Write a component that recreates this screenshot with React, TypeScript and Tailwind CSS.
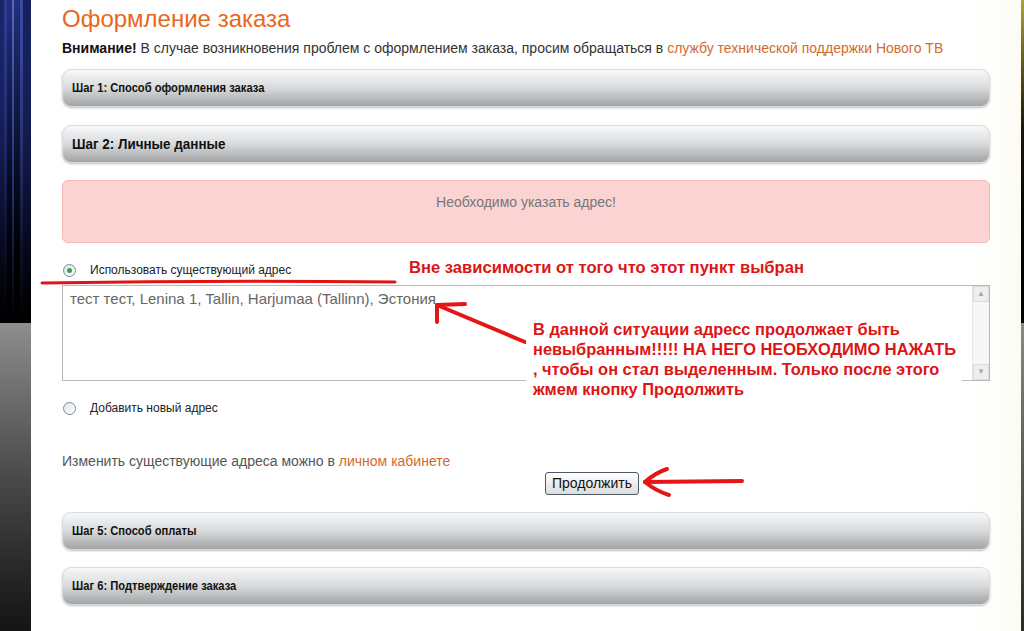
import React from "react";

const font = "font-['Liberation_Sans',Arial,sans-serif]";

function StepBar({ label, big = false }: { label: string; big?: boolean }) {
  return (
    <div className="h-[38px] rounded-[9px] border border-[#d6dde2] bg-linear-to-b from-[#f7f8f9] via-[#d9dadb] to-[#a3a4a6] shadow-[0_1px_2px_rgba(0,0,0,0.25)] flex items-center pl-[9px]">
      <span
        className={
          big
            ? "text-[14px] font-bold text-[#111] origin-left scale-x-[0.96] whitespace-nowrap"
            : "text-[12px] font-bold text-[#111] origin-left scale-x-[0.93] whitespace-nowrap"
        }
      >
        {label}
      </span>
    </div>
  );
}

function Radio({ checked }: { checked?: boolean }) {
  return (
    <span className="w-[13px] h-[13px] rounded-full border border-[#7a8a99] bg-linear-to-br from-[#dfe6ec] to-white flex items-center justify-center">
      {checked && <span className="w-[5px] h-[5px] rounded-full bg-[#3aa34a]" />}
    </span>
  );
}

export default function App() {
  return (
    <div className={`relative w-[1024px] h-[631px] overflow-hidden flex bg-white ${font}`}>
      {/* left frame */}
      <div className="w-[31px] flex flex-col">
        <div className="h-[323px] flex bg-linear-to-b from-[#223080] via-[#05081a] via-60% to-black">
          <div className="w-[4px] bg-linear-to-b from-[#1a2466] to-transparent" />
          <div className="w-[3px] bg-linear-to-b from-[#2c3c90] to-transparent" />
          <div className="w-[5px]" />
          <div className="w-[2px] bg-linear-to-b from-[#5a6ab8] via-[#2a3680] to-transparent" />
          <div className="w-[6px]" />
          <div className="w-[3px] bg-linear-to-b from-[#3a4aa0] to-transparent" />
          <div className="w-[8px] bg-linear-to-b from-[#16205c] to-transparent" />
        </div>
        <div className="flex-1 bg-linear-to-b from-[#8e8e8e] via-[#4a4a4a] to-[#141414]" />
      </div>

      {/* content */}
      <div className="flex-1 px-[31px] bg-linear-to-r from-white via-white via-95% to-[#fcfbf3]">
        <h1 className="mt-[5px] text-[24px] leading-[28px] text-[#e8671c]">Оформление заказа</h1>
        <p className="mt-[6px] text-[14px] leading-[18px] text-[#333]">
          <b className="text-[#111]">Внимание!</b> В случае возникновения проблем с оформлением заказа, просим обращаться в{" "}
          <span className="text-[#d5692a]">службу технической поддержки Нового ТВ</span>
        </p>

        <div className="mt-[12px]">
          <StepBar label="Шаг 1: Способ оформления заказа" />
        </div>
        <div className="mt-[18px]">
          <StepBar label="Шаг 2: Личные данные" big />
        </div>

        <div className="mt-[17px] h-[63px] rounded-[6px] border border-[#f3b8b8] bg-[#fcd3d3] flex justify-center pt-[12px]">
          <span className="text-[14px] leading-[18px] text-[#777]">Необходимо указать адрес!</span>
        </div>

        <div className="mt-[20px] flex items-center h-[14px] pl-[1px]">
          <Radio checked />
          <span className="ml-[14px] text-[12px] text-[#222] whitespace-nowrap">Использовать существующий адрес</span>
        </div>

        <div className="mt-[8px] h-[96px] border border-[#b9b9b9] flex">
          <div className="flex-1 px-[7px] pt-[4px] text-[15px] leading-[18px] text-[#666]">
            тест тест, Lenina 1, Tallin, Harjumaa (Tallinn), Эстония
          </div>
          <div className="w-[17px] flex flex-col justify-between bg-[#f7f7f7] border-l border-[#e6e6e6]">
            <div className="h-[16px] bg-[#eeeeee] border border-[#dcdcdc] flex items-center justify-center text-[8px] text-[#aaa]">
              ▲
            </div>
            <div className="h-[16px] bg-[#eeeeee] border border-[#dcdcdc] flex items-center justify-center text-[8px] text-[#aaa]">
              ▼
            </div>
          </div>
        </div>

        <div className="mt-[20px] flex items-center h-[14px] pl-[1px]">
          <Radio />
          <span className="ml-[14px] text-[12px] text-[#222] whitespace-nowrap">Добавить новый адрес</span>
        </div>

        <p className="mt-[37px] text-[14px] leading-[18px] text-[#555]">
          Изменить существующие адреса можно в <span className="text-[#d5692a]">личном кабинете</span>
        </p>

        <div className="mt-[2px] flex justify-center pl-[132px]">
          <button className="h-[23px] px-[6px] rounded-[3px] border border-[#4d5a66] bg-linear-to-b from-white to-[#dcdcdc] text-[14px] text-[#111]">
            Продолжить
          </button>
        </div>

        <div className="mt-[17px]">
          <StepBar label="Шаг 5: Способ оплаты" />
        </div>
        <div className="mt-[17px]">
          <StepBar label="Шаг 6: Подтверждение заказа" />
        </div>
      </div>

      {/* right frame */}
      <div className="w-[3px] flex flex-col">
        <div className="h-[323px] bg-linear-to-b from-[#b3a23a] via-[#1a1708] via-40% to-black" />
        <div className="flex-1 bg-linear-to-b from-[#8a8a8a] to-[#2a2a2a]" />
      </div>

      {/* red annotations */}
      <svg className="absolute inset-0 pointer-events-none" width="1024" height="631" viewBox="0 0 1024 631">
        <path d="M42 283 Q220 280 395 282" stroke="#e01414" strokeWidth="3" fill="none" strokeLinecap="round" />
        <g stroke="#e41616" strokeWidth="4" fill="none" strokeLinecap="round" strokeLinejoin="round">
          <path d="M437 305 L525 342" />
          <path d="M437 305 L465 304" />
          <path d="M437 305 L437 322" />
        </g>
        <g stroke="#e41616" strokeWidth="4" fill="none" strokeLinecap="round" strokeLinejoin="round">
          <path d="M645 482 L742 481" />
          <path d="M645 482 Q655 473 667 469" />
          <path d="M645 482 Q656 491 669 495" />
        </g>
      </svg>

      <div className="absolute left-[409px] top-[258px] text-[16.6px] leading-[20px] font-bold text-[#dd1515] whitespace-nowrap">
        Вне зависимости от того что этот пункт выбран
      </div>
      <div className="absolute left-[526px] top-[319px] bg-white pl-[7px] pr-[6px] text-[16.4px] leading-[20px] font-bold text-[#dd1515] whitespace-nowrap">
        <div>В данной ситуации адресс продолжает быть</div>
        <div>невыбранным!!!!! НА НЕГО НЕОБХОДИМО НАЖАТЬ</div>
        <div>, чтобы он стал выделенным. Только после этого</div>
        <div>жмем кнопку Продолжить</div>
      </div>
    </div>
  );
}
